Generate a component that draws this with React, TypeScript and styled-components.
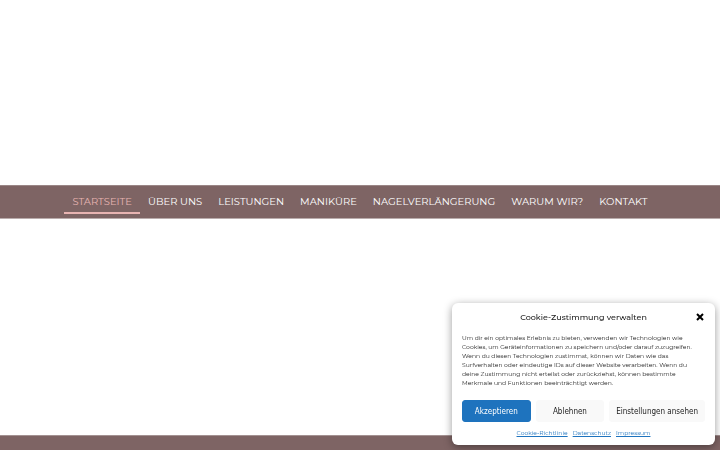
import React from "react";
import styled, { createGlobalStyle } from "styled-components";

const GlobalStyle = createGlobalStyle`
  *, *::before, *::after { box-sizing: border-box; }
  body {
    margin: 0;
    background: #fff;
    font-family: Montserrat, Inter, sans-serif;
  }
`;

const Page = styled.div`
  display: flex;
  flex-direction: column;
  min-height: 100vh;
`;

const Header = styled.header`
  padding-top: 185px;
`;

const Nav = styled.nav`
  display: flex;
  justify-content: center;
  padding: 4px 0;
  background: #7e6464;
  border-top: 1px solid #9a8686;
  border-bottom: 1px solid #b9acac;
`;

const NavLink = styled.a<{ $active?: boolean }>`
  padding: 6px 8px 4px;
  border-bottom: 2px solid ${(p) => (p.$active ? "#e8b4b2" : "transparent")};
  color: ${(p) => (p.$active ? "#e8b4b2" : "#fff")};
  font-size: 10px;
  line-height: 12px;
  text-decoration: none;
  text-transform: uppercase;
  white-space: nowrap;
`;

const Main = styled.main`
  flex: 1;
`;

const Footer = styled.footer`
  height: 15px;
  background: #7e6464;
  border-top: 1px solid #a39191;
`;

const Dialog = styled.section`
  position: fixed;
  right: 5px;
  bottom: 5px;
  width: 263px;
  padding: 8px 10px;
  border-radius: 6px;
  background: #fff;
  box-shadow: 0 2px 8px rgba(0, 0, 0, 0.4);
`;

const DialogHeader = styled.div`
  display: grid;
  grid-template-columns: 10px 1fr 10px;
  align-items: center;
`;

const Title = styled.h2`
  grid-column: 2;
  margin: 0;
  color: #222;
  font-size: 8px;
  font-weight: 500;
  line-height: 12px;
  text-align: center;
`;

const CloseButton = styled.button`
  display: grid;
  place-items: center;
  width: 10px;
  height: 12px;
  padding: 0;
  border: 0;
  background: none;
  color: #000;
  cursor: pointer;
`;

const Message = styled.p`
  margin: 11px 0 12px;
  color: #222;
  font-size: 6px;
  line-height: 9px;
`;

const Actions = styled.div`
  display: flex;
  gap: 5px;
`;

const Button = styled.button<{ $primary?: boolean }>`
  flex: 1 1 0;
  height: 22px;
  padding: 0 6px;
  border: 1px solid ${(p) => (p.$primary ? "#1e73be" : "#f9f9f9")};
  border-radius: 3px;
  background: ${(p) => (p.$primary ? "#1e73be" : "#f9f9f9")};
  color: ${(p) => (p.$primary ? "#fff" : "#222")};
  font-family: "DejaVu Sans Condensed", "DejaVu Sans", sans-serif;
  font-size: 8px;
  white-space: nowrap;
  cursor: pointer;
`;

const Links = styled.div`
  display: flex;
  justify-content: center;
  gap: 5px;
  margin-top: 7px;
`;

const DocumentLink = styled.a`
  color: #1e73be;
  font-size: 6px;
  line-height: 8px;
`;

const pages = [
  "Startseite",
  "Über uns",
  "Leistungen",
  "Maniküre",
  "Nagelverlängerung",
  "Warum wir?",
  "Kontakt",
];

const documents = ["Cookie-Richtlinie", "Datenschutz", "Impressum"];

export default function App() {
  return (
    <Page>
      <GlobalStyle />
      <Header>
        <Nav aria-label="Hauptmenü">
          {pages.map((page, i) => (
            <NavLink key={page} href="#" $active={i === 0} aria-current={i === 0 ? "page" : undefined}>
              {page}
            </NavLink>
          ))}
        </Nav>
      </Header>
      <Main />
      <Footer />
      <Dialog role="dialog" aria-labelledby="consent-title">
        <DialogHeader>
          <Title id="consent-title">Cookie-Zustimmung verwalten</Title>
          <CloseButton type="button" aria-label="Dialog schließen">
            <svg width="8" height="8" viewBox="0 0 8 8" aria-hidden="true">
              <path d="M1 1 7 7M7 1 1 7" stroke="currentColor" strokeWidth="2" />
            </svg>
          </CloseButton>
        </DialogHeader>
        <Message>
          Um dir ein optimales Erlebnis zu bieten, verwenden wir Technologien wie Cookies, um
          Geräteinformationen zu speichern und/oder darauf zuzugreifen. Wenn du diesen Technologien
          zustimmst, können wir Daten wie das Surfverhalten oder eindeutige IDs auf dieser Website
          verarbeiten. Wenn du deine Zustimmung nicht erteilst oder zurückziehst, können bestimmte
          Merkmale und Funktionen beeinträchtigt werden.
        </Message>
        <Actions>
          <Button type="button" $primary>Akzeptieren</Button>
          <Button type="button">Ablehnen</Button>
          <Button type="button">Einstellungen ansehen</Button>
        </Actions>
        <Links>
          {documents.map((name) => (
            <DocumentLink key={name} href="#">{name}</DocumentLink>
          ))}
        </Links>
      </Dialog>
    </Page>
  );
}
